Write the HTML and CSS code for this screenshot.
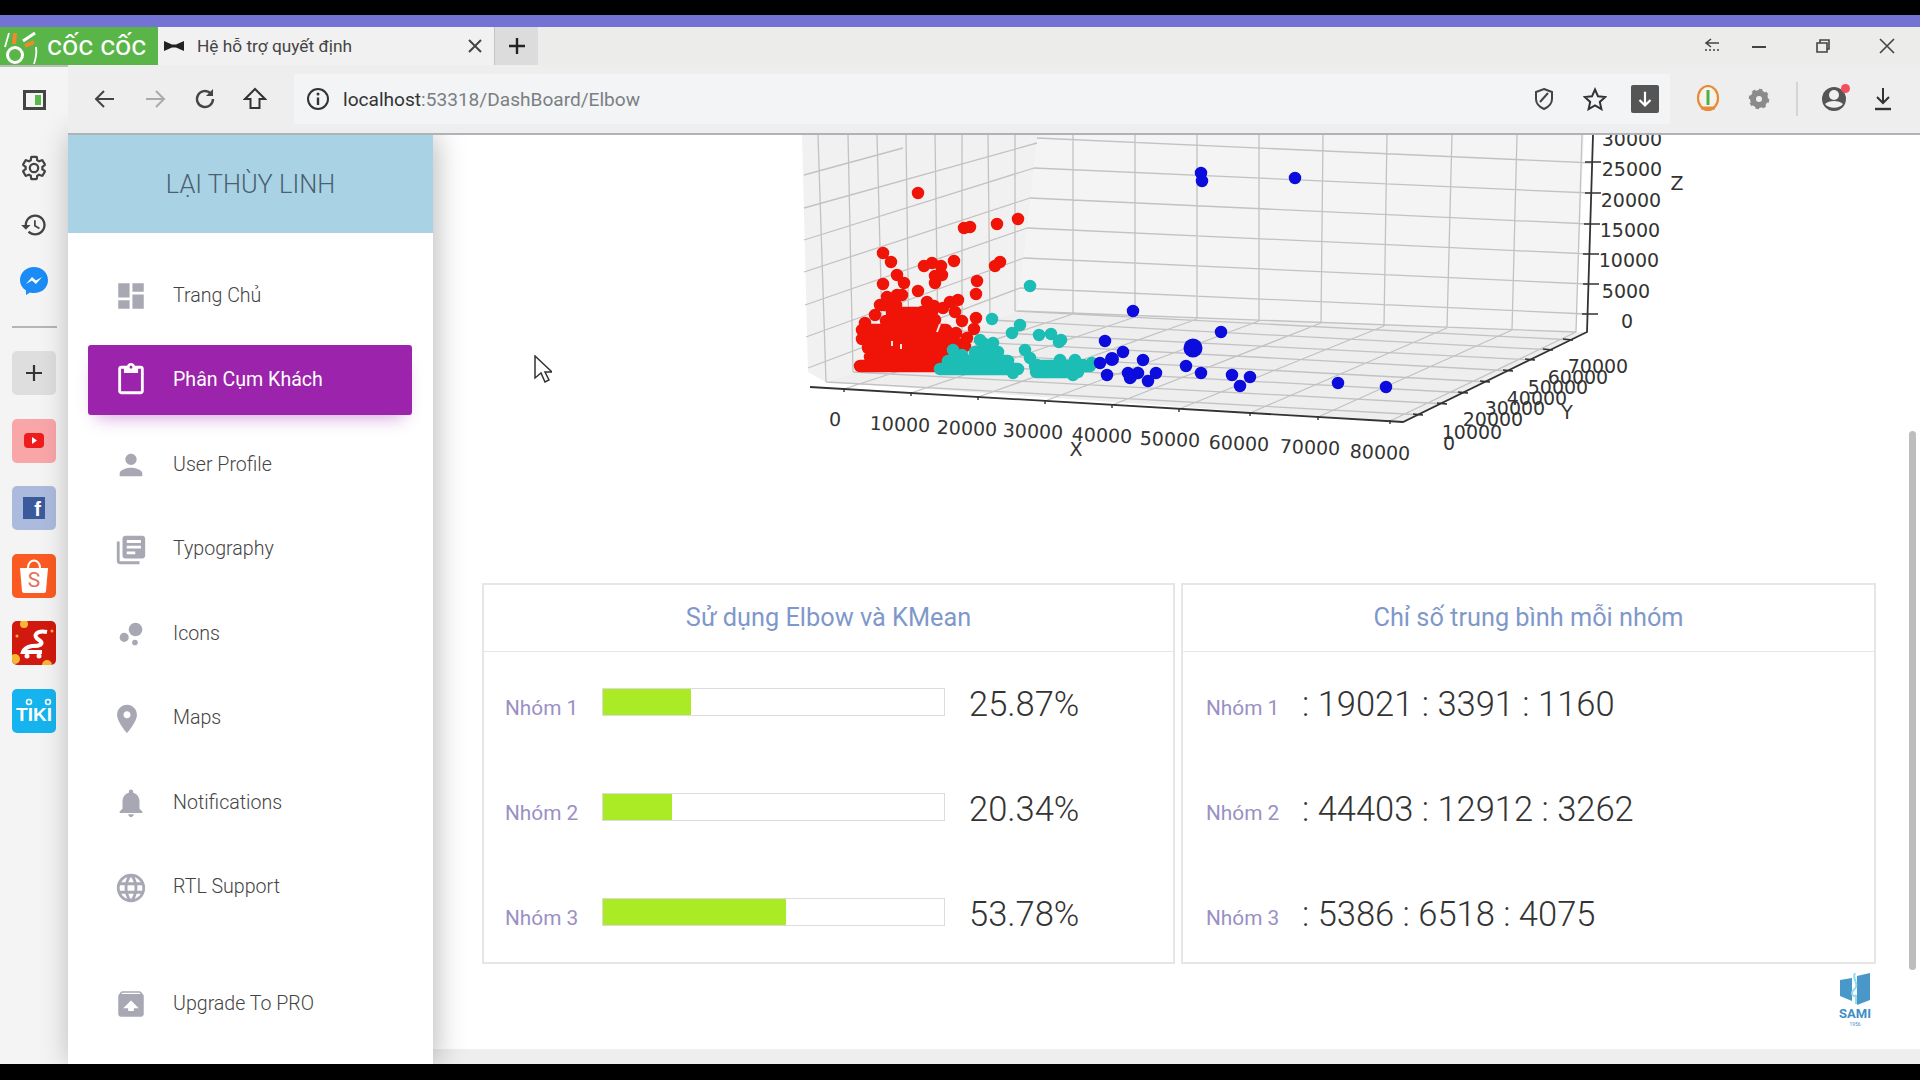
FILE: index.html
```html
<!DOCTYPE html>
<html lang="vi">
<head>
  <meta charset="UTF-8" />
  <title>Hệ hỗ trợ quyết định</title>
  <link rel="stylesheet" href="styles.css">
</head>
<body>
  <div class="top-black"></div>
  <div class="top-purple"></div>

  <!-- Tab strip -->
  <div class="tabstrip">
    <div class="brand">
      <svg class="brand-mark" viewBox="0 0 40 38"><circle cx="15" cy="28" r="7.500" fill="none" stroke="#fff" stroke-width="3"/><path d="M5 20L9 6M36 20c1 6 0 11-2 17" fill="none" stroke="#fff" stroke-width="1.800"/><path d="M15 6l-1 11M25 19l9-4" stroke="#f08a2c" stroke-width="4"/><path d="M23 14L35 6" stroke="#fff" stroke-width="3"/></svg>
      <span>cốc cốc</span>
    </div>
    <div class="tab">
      <svg class="favicon" viewBox="0 0 20 12"><path d="M0 1l8 3.5h4L20 1v10l-8-3.5H8L0 11z" fill="#222"/></svg>
      <span class="tab-title">Hệ hỗ trợ quyết định</span>
      <svg class="tab-close" viewBox="0 0 16 16"><path d="M2 2l12 12M14 2L2 14" stroke="#444" stroke-width="2"/></svg>
    </div>
    <div class="tab-new"><svg viewBox="0 0 18 18"><path d="M9 1v16M1 9h16" stroke="#222" stroke-width="2.4"/></svg></div>
    <div class="win-controls">
      <svg viewBox="0 0 16 16"><path d="M15 5H3M7 1L2 5l5 4" fill="none" stroke="#444" stroke-width="1.6"/><path d="M1 12h14" stroke="#444" stroke-width="1.6" stroke-dasharray="2 2"/></svg>
      <svg class="win-min" viewBox="0 0 16 16"><path d="M1 9h14" stroke="#444" stroke-width="2"/></svg>
      <svg viewBox="0 0 16 16"><path d="M2 5h10v9H2zM5 5V2h9v9h-2" fill="none" stroke="#444" stroke-width="1.6"/></svg>
      <svg viewBox="0 0 16 16"><path d="M1 1l14 14M15 1L1 15" stroke="#444" stroke-width="1.6"/></svg>
    </div>
  </div>

  <div class="window">
    <!-- Left strip of the browser -->
    <div class="appbar">
      <svg class="bar-toggle" viewBox="0 0 23 20"><rect x="1.5" y="1.5" width="20" height="17" fill="#f4f4f4" stroke="#444" stroke-width="3"/><rect x="12" y="5" width="6" height="10" fill="#57b947"/></svg>
      <svg class="bar-gear" viewBox="0 0 24 24"><path fill="none" stroke="#444" stroke-width="1.9" d="M19.14 12.94c.04-.3.06-.61.06-.94 0-.32-.02-.64-.07-.94l2.03-1.58c.18-.14.23-.41.12-.61l-1.92-3.32c-.12-.22-.37-.29-.59-.22l-2.39.96c-.5-.38-1.03-.7-1.62-.94l-.36-2.54c-.04-.24-.24-.41-.48-.41h-3.84c-.24 0-.43.17-.47.41l-.36 2.54c-.59.24-1.13.57-1.62.94l-2.39-.96c-.22-.08-.47 0-.59.22L2.74 8.87c-.12.21-.08.47.12.61l2.03 1.58c-.05.3-.07.62-.07.94s.02.64.07.94l-2.03 1.58c-.18.14-.23.41-.12.61l1.92 3.32c.12.22.37.29.59.22l2.39-.96c.5.38 1.03.7 1.62.94l.36 2.54c.05.24.24.41.48.41h3.84c.24 0 .44-.17.47-.41l.36-2.54c.59-.24 1.13-.56 1.62-.94l2.39.96c.22.08.47 0 .59-.22l1.92-3.32c.12-.22.07-.47-.12-.61l-2.01-1.58zM12 15.6c-1.98 0-3.6-1.62-3.6-3.6s1.62-3.6 3.6-3.6 3.6 1.62 3.6 3.6-1.62 3.6-3.6 3.6z"/></svg>
      <svg class="bar-history" viewBox="0 0 24 24"><path fill="#444" d="M13 3c-4.97 0-9 4.03-9 9H1l3.89 3.89.07.14L9 12H6c0-3.87 3.13-7 7-7s7 3.13 7 7-3.13 7-7 7c-1.93 0-3.68-.79-4.94-2.06l-1.42 1.42C8.27 19.99 10.51 21 13 21c4.97 0 9-4.03 9-9s-4.03-9-9-9zm-1 5v5l4.28 2.54.72-1.21-3.5-2.08V8H12z"/></svg>
      <svg class="bar-messenger" viewBox="0 0 28 28"><path fill="#1b8cf5" d="M14 0c8 0 14 5.800 14 13.200S22 26 14 26c-1.500 0-2.800-.2-4-.6L6 28v-4.500C2.300 21 0 17.400 0 13.200 0 5.800 6 0 14 0z"/><path fill="#fff" d="M6 17l6-7 4 3.500 6-3.500-6 7-4-3.500z"/></svg>
      <div class="bar-divider"></div>
      <div class="bar-apps">
        <div class="app app-plus"><svg viewBox="0 0 18 18"><path d="M9 1v16M1 9h16" stroke="#333" stroke-width="2.2"/></svg></div>
        <div class="app app-youtube"><svg viewBox="0 0 20 15"><rect width="20" height="15" rx="4" fill="#ee1c1c"/><path d="M8 4l5 3.500L8 11z" fill="#fff"/></svg></div>
        <div class="app app-facebook"><div class="fb-square">f</div></div>
        <div class="app app-shopee"><svg viewBox="0 0 32 34"><path d="M10 9c0-10 12-10 12 0" fill="none" stroke="#fff" stroke-width="2"/><path d="M2 9h28l-2 23c0 1-1 2-2 2H6c-1 0-2-1-2-2z" fill="#fff"/></svg><span>S</span></div>
        <div class="app app-sendo"><svg viewBox="0 0 44 44"><circle cx="12" cy="3" r="4" fill="#f7b733"/><circle cx="3" cy="38" r="5" fill="#f7b733"/><circle cx="35" cy="44" r="5" fill="#f7b733"/><circle cx="5" cy="15" r="1.500" fill="#f7b733"/><circle cx="40" cy="10" r="1.500" fill="#f7b733"/><path d="M35 11C24 9 20 15 27 19C33 23 28 25 20 25C15 26 12 28 11 31H30" fill="none" stroke="#fff" stroke-width="4"/><circle cx="15" cy="35" r="2.500" fill="#fff"/><circle cx="27" cy="35" r="2.500" fill="#fff"/></svg></div>
        <div class="app app-tiki">TIKI<svg class="tiki-eyes" viewBox="0 0 44 8"><circle cx="17" cy="4" r="2.500" fill="none" stroke="#fff" stroke-width="1.500"/><circle cx="36" cy="4" r="2.500" fill="none" stroke="#fff" stroke-width="1.500"/></svg></div>
      </div>
    </div>

    <div class="pane">
      <!-- Address bar -->
      <div class="toolbar">
        <svg class="tb-icon tb-back" viewBox="0 0 24 24"><path d="M21 12H4M11 4l-8 8 8 8" fill="none" stroke="#444" stroke-width="2"/></svg>
        <svg class="tb-icon" viewBox="0 0 24 24"><path d="M3 12h17M13 4l8 8-8 8" fill="none" stroke="#aaa" stroke-width="2"/></svg>
        <svg class="tb-icon" viewBox="0 0 24 24"><path d="M20 12a8 8 0 1 1-2.500-5.800" fill="none" stroke="#444" stroke-width="2.400"/><path d="M20 2v7h-7" fill="#444"/></svg>
        <svg class="tb-icon" viewBox="0 0 24 24"><path d="M12 2L2 12h5.500v9h9v-9H22z" fill="none" stroke="#333" stroke-width="2"/></svg>
        <div class="urlbox">
          <svg class="tb-icon" viewBox="0 0 24 24"><circle cx="12" cy="12" r="10" fill="none" stroke="#333" stroke-width="2"/><path d="M12 10.500V18" stroke="#333" stroke-width="2.400"/><circle cx="12" cy="7" r="1.500" fill="#333"/></svg>
          <span class="url"><b>localhost</b>:53318/DashBoard/Elbow</span>
          <svg class="tb-icon url-shield" viewBox="0 0 24 24"><path d="M12 2l8 3v7c0 5-3.500 8-8 10-4.500-2-8-5-8-10V5z" fill="none" stroke="#444" stroke-width="2"/><path d="M8 15l8-9" stroke="#444" stroke-width="2"/></svg>
          <svg class="tb-icon url-star" viewBox="0 0 24 24"><path d="M12 2.500l3 6.800 7.300.7-5.500 4.900 1.600 7.200L12 18.300l-6.400 3.800 1.600-7.200L1.700 10l7.300-.7z" fill="none" stroke="#333" stroke-width="2"/></svg>
          <div class="url-download"><svg viewBox="0 0 24 24"><path d="M12 4v15M6 13l6 6 6-6" fill="none" stroke="#fff" stroke-width="2.400"/></svg></div>
        </div>
        <svg class="tb-icon tb-orange" viewBox="0 0 24 28"><ellipse cx="12" cy="13" rx="10" ry="12" fill="#f6f3ea" stroke="#e98a3a" stroke-width="2.200"/><path d="M12 5v15" stroke="#4caf50" stroke-width="3"/><path d="M5 23h14" stroke="#e98a3a" stroke-width="3"/></svg>
        <svg class="tb-icon tb-cog" viewBox="0 0 24 24"><circle cx="12" cy="12" r="6" fill="none" stroke="#8a8a8a" stroke-width="6"/><circle cx="12" cy="12" r="9" fill="none" stroke="#8a8a8a" stroke-width="2.500" stroke-dasharray="3.500 3.500"/></svg>
        <div class="tb-divider"></div>
        <div class="tb-profile">
          <svg class="tb-icon" viewBox="0 0 26 28"><circle cx="13" cy="14" r="12" fill="#555"/><circle cx="13" cy="10" r="5" fill="#f0f0f0"/><path d="M4 19c4-4 14-4 18 0-4 5-14 5-18 0z" fill="#f0f0f0"/></svg>
          <div class="tb-badge"></div>
        </div>
        <svg class="tb-icon tb-save" viewBox="0 0 24 24"><path d="M12 1v15M6 10l6 6 6-6" fill="none" stroke="#333" stroke-width="2"/><path d="M4 22h16" stroke="#333" stroke-width="2.400"/></svg>
      </div>

      <div class="page">
        <!-- Sidebar -->
        <aside class="sidebar">
          <div class="side-head">LẠI THÙY LINH</div>
          <nav class="side-nav">
            <a class="nav-item">
              <svg class="nav-icon" viewBox="0 0 24 24"><path d="M3 13h8V3H3v10zm0 8h8v-6H3v6zm10 0h8V11h-8v10zm0-18v6h8V3h-8z"/></svg>
              Trang Chủ
            </a>
            <a class="nav-item active">
              <svg class="nav-icon" viewBox="0 0 24 24"><path d="M19 2h-4.180C14.400.84 13.300 0 12 0c-1.300 0-2.400.84-2.820 2H5c-1.100 0-2 .9-2 2v16c0 1.100.9 2 2 2h14c1.100 0 2-.9 2-2V4c0-1.100-.9-2-2-2zm-7 0c.55 0 1 .45 1 1s-.45 1-1 1-1-.45-1-1 .45-1 1-1zm7 18H5V4h2v3h10V4h2v16z"/></svg>
              Phân Cụm Khách
            </a>
            <a class="nav-item">
              <svg class="nav-icon" viewBox="0 0 24 24"><path d="M12 12c2.210 0 4-1.790 4-4s-1.790-4-4-4-4 1.790-4 4 1.790 4 4 4zm0 2c-2.670 0-8 1.340-8 4v2h16v-2c0-2.660-5.330-4-8-4z"/></svg>
              User Profile
            </a>
            <a class="nav-item">
              <svg class="nav-icon" viewBox="0 0 24 24"><path d="M4 6H2v14c0 1.100.9 2 2 2h14v-2H4V6zm16-4H8c-1.100 0-2 .9-2 2v12c0 1.100.9 2 2 2h12c1.100 0 2-.9 2-2V4c0-1.100-.9-2-2-2zm-1 9H9V9h10v2zm-4 4H9v-2h6v2zm4-8H9V5h10v2z"/></svg>
              Typography
            </a>
            <a class="nav-item">
              <svg class="nav-icon" viewBox="0 0 24 24"><circle cx="7.200" cy="14.400" r="3.200"/><circle cx="14.800" cy="18" r="2"/><circle cx="15.200" cy="8.800" r="4.800"/></svg>
              Icons
            </a>
            <a class="nav-item">
              <svg class="nav-icon nav-pin" viewBox="0 0 24 24"><path d="M12 2C8.130 2 5 5.130 5 9c0 5.250 7 13 7 13s7-7.750 7-13c0-3.870-3.130-7-7-7zm0 9.500c-1.380 0-2.500-1.120-2.500-2.500s1.120-2.500 2.500-2.500 2.500 1.120 2.500 2.500-1.120 2.500-2.500 2.500z"/></svg>
              Maps
            </a>
            <a class="nav-item">
              <svg class="nav-icon" viewBox="0 0 24 24"><path d="M12 22c1.100 0 2-.9 2-2h-4c0 1.100.89 2 2 2zm6-6v-5c0-3.070-1.640-5.640-4.500-6.320V4c0-.83-.67-1.500-1.500-1.500s-1.500.67-1.500 1.500v.68C7.630 5.360 6 7.920 6 11v5l-2 2v1h16v-1l-2-2z"/></svg>
              Notifications
            </a>
            <a class="nav-item">
              <svg class="nav-icon" viewBox="0 0 24 24"><path d="M11.990 2C6.470 2 2 6.480 2 12s4.470 10 9.990 10C17.520 22 22 17.520 22 12S17.520 2 11.990 2zm6.930 6h-2.950c-.32-1.250-.78-2.450-1.380-3.560 1.840.63 3.370 1.910 4.330 3.560zM12 4.040c.83 1.200 1.480 2.530 1.910 3.960h-3.820c.43-1.430 1.080-2.760 1.910-3.960zM4.260 14C4.100 13.360 4 12.690 4 12s.1-1.360.26-2h3.380c-.08.66-.14 1.320-.14 2 0 .68.06 1.340.14 2H4.260zm.82 2h2.950c.32 1.250.78 2.450 1.380 3.560-1.840-.63-3.370-1.900-4.330-3.560zm2.950-8H5.080c.96-1.660 2.490-2.930 4.330-3.560C8.810 5.550 8.350 6.750 8.030 8zM12 19.960c-.83-1.200-1.480-2.530-1.910-3.960h3.820c-.43 1.430-1.080 2.760-1.910 3.960zM14.340 14H9.660c-.09-.66-.16-1.320-.16-2 0-.68.07-1.350.16-2h4.680c.09.65.16 1.320.16 2 0 .68-.07 1.340-.16 2zm.25 5.560c.6-1.110 1.060-2.310 1.380-3.560h2.950c-.96 1.650-2.490 2.930-4.330 3.560zM16.360 14c.08-.66.14-1.320.14-2 0-.68-.06-1.340-.14-2h3.380c.16.64.26 1.310.26 2s-.1 1.360-.26 2h-3.380z"/></svg>
              RTL Support
            </a>
            <a class="nav-item nav-upgrade">
              <svg class="nav-icon" viewBox="0 0 24 24"><path d="M20.550 5.220l-1.390-1.680C18.880 3.210 18.470 3 18 3H6c-.47 0-.88.21-1.150.55L3.460 5.220C3.170 5.570 3 6.010 3 6.500V19c0 1.100.89 2 2 2h14c1.100 0 2-.9 2-2V6.500c0-.49-.17-.93-.45-1.280zM12 9.500l5.500 5.500H14v2h-4v-2H6.500L12 9.500zM5.120 5l.82-1h12l.93 1H5.120z"/></svg>
              Upgrade To PRO
            </a>
          </nav>
        </aside>

        <!-- Main content -->
        <main class="main">
          <!-- viewBox keeps screen coordinates so the plot can be read off the picture -->
          <svg class="chart" viewBox="433 135 1487 448">
            <polygon class="pane-left" points="802,135 1038,135 1018,311 826,382 808,372"/>
            <polygon class="pane-back" points="1038,135 1584,135 1576,332 1018,311"/>
            <polygon class="pane-floor" points="826,382 1403,422 1587,332 1576,332 1018,311"/>
            <!-- grid -->
            <path class="grid" d="M1034 168L1590 193M1030 198L1590 224M1027 228L1590 254M1024 258L1587 284M1020 288L1587 314M1037 138L1593 163
              M804 175L903 148M804 208L1037 143M804 240L1034 168M804 272L1030 198M805 305L1027 228M806 337L1024 258M808 368L1020 288
              M818 135L826 382M848 135L853 372M877 135L883 361M906 135L909 351M935 135L938 340M962 135L962 331M988 135L990 320M1015 135L1015 311
              M1073 135V314M1135 135L1135 317M1197 135L1197 319M1259 135L1259 321M1323 135L1321 323M1387 135L1384 326M1452 135L1447 328M1517 135L1512 330M1582 135L1576 332
              M1018 311L1576 332
              M1073 314L844 389M1135 317L911 393M1197 319L978 397M1259 321L1045 401M1321 323L1112 405M1384 326L1179 409M1447 328L1250 413M1512 330L1318 417M1576 332L1390 421
              M826 382L1423 415M853 372L1447 404M883 361L1468 393M909 351L1490 382M938 340L1513 371M962 331L1535 360M990 320L1553 350M1015 311L1573 340"/>
            <!-- axes and ticks -->
            <path class="axis" d="M810 387L1403 422L1587 332L1593 135"/>
            <path class="tick" d="M1585 162h16M1585 193h16M1584 224h16M1583 254h16M1583 284h16M1582 314h16
              M844 388v4M911 392v4M978 396v4M1045 400v4M1112 404v4M1179 408v4M1250 412v4M1318 416v4M1390 420v4
              M1423 415l-10 -1M1447 404l-10 -1M1468 393l-10 -1M1490 382l-10 -1M1513 371l-10 -1M1535 360l-10 -1M1553 350l-10 -1M1573 340l-10 -1"/>
            <!-- clusters -->
            <path class="dots red" d="M918 193h0M964 228h0M970 227h0M997 224h0M1018 219h0M883 253h0M891 262h0M924 266h0M932 263h0M941 266h0M954 261h0M995 266h0M1000 262h0M935 276h0M942 275h0M935 283h0M897 275h0M904 283h0M883 284h0M918 291h0M897 295h0M902 295h0M977 281h0M976 294h0
              M887 297h0M880 305h0M888 305h0M875 315h0M865 323h0M927 302h0M922 312h0M934 306h0M950 302h0M958 300h0M943 308h0M955 312h0M962 321h0M935 320h0M976 318h0M974 329h0M967 338h0M965 346h0M948 335h0M956 333h0M953 340h0
              M860 366H938M870 357H944M868 348H942M862 339H938M862 330H936M886 321H927M892 313H918M884 305H896M928 330H946M944 344H958M927 312H932"/>
            <path class="gap" d="M892 341v5M901 344v5M940 324l-3 8M944 322h3"/>
            <path class="dots teal" d="M1030 286h0M992 319h0M1020 325h0M1012 333h0M1039 335h0M1051 334h0M1061 340h0M1059 342h0
              M980 340h0M983 343h0M993 343h0M997 353h0M1007 363h0M1013 373h0M953 350h0M962 355h0M948 363h0M1025 350h0M1030 358h0M1037 365h0M1047 372h0M1060 360h0M1075 360h0M1073 375h0M1063 372h0M1083 365h0M1092 363h0
              M940 369H1018M948 361H1008M975 352H998M1035 366H1090M1036 372H1078"/>
            <path class="dots blue" d="M1201 173h0M1202 181h0M1295 178h0M1133 311h0M1221 332h0M1105 341h0M1123 352h0M1112 359h0M1100 363h0M1143 360h0M1186 366h0M1107 375h0M1201 373h0M1232 375h0M1250 377h0M1240 386h0M1128 373h0M1130 378h0M1138 373h0M1131 377h0M1148 381h0M1156 373h0M1338 383h0M1386 387h0"/>
            <circle class="blue-big" cx="1193" cy="348" r="9.500"/>
            <circle class="blue-big" cx="1112" cy="359" r="7"/>
            <!-- z labels -->
            <text x="1632" y="139">30000</text>
            <text x="1632" y="169">25000</text>
            <text x="1631" y="200">20000</text>
            <text x="1630" y="230">15000</text>
            <text x="1629" y="260">10000</text>
            <text x="1626" y="291">5000</text>
            <text x="1627" y="321">0</text>
            <text x="1677" y="183">Z</text>
            <!-- x labels -->
            <text x="835" y="419" transform="rotate(2.500 835 419)">0</text>
            <text x="900" y="424" transform="rotate(2.500 900 424)">10000</text>
            <text x="967" y="428" transform="rotate(2.500 967 428)">20000</text>
            <text x="1033" y="431" transform="rotate(2.500 1033 431)">30000</text>
            <text x="1102" y="435" transform="rotate(2.500 1102 435)">40000</text>
            <text x="1170" y="439" transform="rotate(2.500 1170 439)">50000</text>
            <text x="1239" y="443" transform="rotate(2.500 1239 443)">60000</text>
            <text x="1310" y="447" transform="rotate(2.500 1310 447)">70000</text>
            <text x="1380" y="452" transform="rotate(2.500 1380 452)">80000</text>
            <text x="1076" y="449">X</text>
            <!-- y labels -->
            <text x="1449" y="443">0</text>
            <text x="1472" y="432">10000</text>
            <text x="1493" y="419">20000</text>
            <text x="1515" y="408">30000</text>
            <text x="1537" y="398">40000</text>
            <text x="1558" y="387">50000</text>
            <text x="1578" y="377">60000</text>
            <text x="1598" y="366">70000</text>
            <text x="1567" y="412">Y</text>
          </svg>

          <div class="cards">
            <section class="card card-usage">
              <h3 class="card-title">Sử dụng Elbow và KMean</h3>
              <div class="card-rows">
                <div class="row">
                  <span class="row-label">Nhóm 1</span>
                  <div class="bar"><div class="bar-fill" style="width: 25.87%"></div></div>
                  <span class="row-value pct">25.87%</span>
                </div>
                <div class="row">
                  <span class="row-label">Nhóm 2</span>
                  <div class="bar"><div class="bar-fill" style="width: 20.34%"></div></div>
                  <span class="row-value pct">20.34%</span>
                </div>
                <div class="row">
                  <span class="row-label">Nhóm 3</span>
                  <div class="bar"><div class="bar-fill" style="width: 53.78%"></div></div>
                  <span class="row-value pct">53.78%</span>
                </div>
              </div>
            </section>
            <section class="card">
              <h3 class="card-title">Chỉ số trung bình mỗi nhóm</h3>
              <div class="card-rows card-rows-avg">
                <div class="row">
                  <span class="row-label">Nhóm 1</span>
                  <span class="row-value">: 19021 : 3391 : 1160</span>
                </div>
                <div class="row">
                  <span class="row-label">Nhóm 2</span>
                  <span class="row-value">: 44403 : 12912 : 3262</span>
                </div>
                <div class="row">
                  <span class="row-label">Nhóm 3</span>
                  <span class="row-value">: 5386 : 6518 : 4075</span>
                </div>
              </div>
            </section>
          </div>

          <div class="logo-row">
            <div class="sami">
              <svg viewBox="0 0 30 34"><path d="M0 7l12-2v23L0 23zM17 3L30 0v27l-13 5z" fill="#4a97c9"/><path d="M15 0c-3 6 3 9 1 14-1 3-4 3-4 6s3 4 4 2v9" fill="none" stroke="#8fdcea" stroke-width="2"/></svg>
              <span class="sami-name">SAMI</span>
              <span class="sami-year">1956</span>
            </div>
          </div>
          <div class="bottom-strip"></div>

          <div class="scroll-thumb"></div>
          <svg class="cursor" viewBox="0 0 18 28"><path d="M1 1v22l6-5 4 9 4-2-4-8h7z" fill="#fff" stroke="#333" stroke-width="1.500"/></svg>
        </main>
      </div>
    </div>
  </div>
  <div class="bottom-black"></div>
</body>
</html>
```
FILE: styles.css
```css
/* Page frame */
body {
  margin: 0;
  width: 1920px;
  height: 1080px;
  overflow: hidden;
  background: #000;
  font-family: Roboto, "Noto Sans", sans-serif;
  display: flex;
  flex-direction: column;
}
.top-black {
  height: 15px;
  flex: none;
}
.top-purple {
  height: 12px;
  flex: none;
  background: #7373d3;
}
.bottom-black {
  flex: 1;
}

/* Tab strip */
.tabstrip {
  height: 38px;
  flex: none;
  display: flex;
  align-items: stretch;
  background: #ececea;
  border-bottom: 2px solid #bdbdbd;
  box-sizing: content-box;
  margin-bottom: -2px;
  position: relative;
  z-index: 2;
}
.brand {
  width: 158px;
  flex: none;
  background: #59b548;
  color: #fff;
  display: flex;
  align-items: center;
  font-size: 28.5px;
  line-height: 1;
  white-space: nowrap;
}
.brand-mark {
  width: 40px;
  height: 38px;
  margin-right: 7px;
}
.tab {
  width: 337px;
  flex: none;
  display: flex;
  align-items: center;
  background: #f1f1f1;
  border-right: 1px solid #c4c4c4;
  box-sizing: border-box;
  padding-left: 6px;
}
.favicon {
  width: 20px;
  height: 12px;
}
.tab-title {
  margin-left: 13px;
  font-size: 17.3px;
  color: #444;
}
.tab-close {
  width: 16px;
  height: 16px;
  margin-left: auto;
  margin-right: 11px;
}
.tab-new {
  width: 43px;
  flex: none;
  background: #dcdcdc;
  display: flex;
  align-items: center;
  justify-content: center;
}
.tab-new svg {
  width: 18px;
  height: 18px;
}
.win-controls {
  margin-left: auto;
  display: flex;
  align-items: center;
  padding-right: 25px;
}
.win-controls svg {
  width: 16px;
  height: 16px;
  margin-left: 48px;
}
.win-controls .win-min {
  margin-left: 31px;
}

/* Left strip */
.window {
  flex: none;
  height: 999px;
  display: flex;
}
.appbar {
  width: 68px;
  flex: none;
  background: #f4f4f4;
  display: flex;
  flex-direction: column;
  align-items: center;
  padding-top: 25px;
  box-sizing: border-box;
}
.bar-toggle {
  width: 23px;
  height: 20px;
}
.bar-gear {
  width: 28px;
  height: 28px;
  margin-top: 44px;
}
.bar-history {
  width: 28px;
  height: 28px;
  margin-top: 29px;
}
.bar-messenger {
  width: 28px;
  height: 28px;
  margin-top: 28px;
}
.bar-divider {
  width: 45px;
  height: 2px;
  margin-top: 31px;
  background: #b5b5b5;
}
.bar-apps {
  margin-top: 23px;
  display: flex;
  flex-direction: column;
  gap: 23.6px;
}
.app {
  width: 44px;
  height: 44px;
  border-radius: 5px;
  display: flex;
  align-items: center;
  justify-content: center;
  position: relative;
}
.app-plus {
  background: #dedede;
}
.app-plus svg {
  width: 18px;
  height: 18px;
}
.app-youtube {
  background: #f9a6a9;
}
.app-youtube svg {
  width: 20px;
  height: 15px;
}
.app-facebook {
  background: #acbbdd;
}
.fb-square {
  width: 22px;
  height: 22px;
  background: #3b5a9c;
  color: #fff;
  font-family: "Liberation Sans", sans-serif;
  font-weight: 700;
  font-size: 20px;
  line-height: 24px;
  text-align: right;
  padding-right: 4px;
  box-sizing: border-box;
}
.app-shopee {
  background: #fb5a22;
}
.app-shopee svg {
  width: 32px;
  height: 34px;
}
.app-shopee span {
  position: absolute;
  left: 0;
  right: 0;
  top: 14px;
  text-align: center;
  color: #e0705a;
  font-size: 21px;
  line-height: 24px;
}
.app-sendo {
  background: #d2190f;
  overflow: hidden;
}
.app-sendo svg {
  width: 44px;
  height: 44px;
}
.app-tiki {
  background: #16b4ee;
  color: #fff;
  font-family: "Liberation Sans", sans-serif;
  font-weight: 700;
  font-size: 19px;
  padding-top: 9px;
  box-sizing: border-box;
}
.tiki-eyes {
  position: absolute;
  left: 0;
  top: 9px;
  width: 44px;
  height: 8px;
}

/* Toolbar */
.pane {
  flex: 1;
  min-width: 0;
  display: flex;
  flex-direction: column;
}
.toolbar {
  height: 70px;
  flex: none;
  display: flex;
  align-items: center;
  background: #eeeeee;
  border-bottom: 2px solid #adb3b8;
  box-sizing: border-box;
  padding-left: 25px;
  gap: 26px;
  position: relative;
  z-index: 2;
}
.tb-icon {
  width: 24px;
  height: 24px;
  flex: none;
}
.urlbox {
  width: 1376px;
  height: 50px;
  flex: none;
  margin-left: 1px;
  background: #f2f4f5;
  display: flex;
  align-items: center;
  box-sizing: border-box;
  padding-left: 12px;
}
.url {
  margin-left: 13px;
  font-size: 19.1px;
  color: #7b7f84;
  white-space: nowrap;
}
.url b {
  font-weight: 400;
  color: #333;
}
.url-shield {
  margin-left: auto;
}
.url-star {
  margin-left: 27px;
}
.url-download {
  width: 28px;
  height: 28px;
  margin-left: 24px;
  margin-right: 11px;
  background: #555;
  border-radius: 2px;
  display: flex;
  align-items: center;
  justify-content: center;
}
.url-download svg {
  width: 22px;
  height: 22px;
}
.tb-orange {
  height: 28px;
}
.tb-cog {
  margin-left: 1px;
}
.tb-divider {
  width: 2px;
  height: 34px;
  background: #d5d5d5;
  margin-left: -1px;
}
.tb-profile {
  position: relative;
  width: 26px;
  height: 28px;
  margin-left: -3px;
}
.tb-profile .tb-icon {
  width: 26px;
  height: 28px;
  display: block;
}
.tb-badge {
  position: absolute;
  right: -3px;
  top: -1px;
  width: 9px;
  height: 9px;
  border-radius: 50%;
  background: #f4505b;
}
.tb-save {
  margin-left: -2px;
}

/* Page area */
.page {
  flex: 1;
  min-height: 0;
  display: flex;
}
.sidebar {
  width: 365px;
  flex: none;
  background: #fff;
  box-shadow: 3px 0 28px rgba(0, 0, 0, 0.28);
  position: relative;
  z-index: 1;
  display: flex;
  flex-direction: column;
}
.side-head {
  height: 98px;
  flex: none;
  background: #a9d3e5;
  color: #4a5f70;
  font-size: 25.4px;
  font-weight: 300;
  display: flex;
  align-items: center;
  justify-content: center;
}
.side-nav {
  padding: 27px 21px 0 20px;
  display: flex;
  flex-direction: column;
  gap: 14.5px;
}
.nav-item {
  height: 70px;
  display: flex;
  align-items: center;
  padding-left: 26px;
  gap: 25px;
  font-size: 19.6px;
  font-weight: 300;
  color: #444;
  border-radius: 3px;
}
.nav-icon {
  width: 34px;
  height: 34px;
  flex: none;
  margin-top: 2px;
  fill: #a8a8b4;
}
.nav-pin {
  margin-left: -4px;
  margin-right: 4px;
}
.nav-item.active {
  background: #9c23ab;
  color: #fff;
  font-weight: 400;
  box-shadow: 0 10px 18px -8px rgba(156, 39, 176, 0.45);
}
.nav-item.active .nav-icon {
  fill: #fff;
  margin-top: 0;
}
.nav-upgrade {
  margin-top: 32px;
}

/* Main content */
.main {
  flex: 1;
  min-width: 0;
  background: #fff;
  position: relative;
  overflow: hidden;
  display: flex;
  flex-direction: column;
}

/* 3D scatter */
.chart {
  width: 1487px;
  height: 448px;
  flex: none;
  display: block;
}
.chart text {
  font-family: "DejaVu Sans", sans-serif;
  font-size: 19px;
  fill: #333;
  text-anchor: middle;
  dominant-baseline: central;
}
.pane-left {
  fill: #f1f1f1;
}
.pane-back {
  fill: #f4f4f4;
}
.pane-floor {
  fill: #eeeeee;
}
.grid {
  fill: none;
  stroke: #c2c2c2;
  stroke-width: 1.3;
}
.axis {
  fill: none;
  stroke: #333;
  stroke-width: 1.8;
}
.tick {
  fill: none;
  stroke: #333;
  stroke-width: 1.4;
}
.dots {
  fill: none;
  stroke-width: 12.5;
  stroke-linecap: round;
}
.red {
  stroke: #f01408;
}
.teal {
  stroke: #1cbdb5;
}
.blue {
  stroke: #0c0cdc;
}
.blue-big {
  fill: #0c0cdc;
}
.gap {
  fill: none;
  stroke: #fbe4e0;
  stroke-width: 2;
}

/* Cards */
.cards {
  display: flex;
  gap: 6px;
  padding: 0 44px 0 49px;
  flex: none;
}
.card {
  flex: 1;
  border: 2px solid #e6e6e6;
}
.card-usage {
  flex: none;
  width: 693px;
  box-sizing: border-box;
}
.card-title {
  margin: 0;
  height: 66px;
  line-height: 66px;
  border-bottom: 1px solid #e6e6e6;
  text-align: center;
  font-size: 25.3px;
  font-weight: 400;
  color: #7f98ca;
}
.card-rows {
  display: flex;
  flex-direction: column;
  gap: 5px;
  padding-left: 21px;
}
.card-rows-avg {
  padding-left: 23px;
}
.row {
  height: 100px;
  display: flex;
  align-items: center;
}
.row-label {
  width: 97px;
  flex: none;
  padding-top: 12px;
  font-size: 20.8px;
  color: #9a90c4;
}
.card-rows-avg .row-label {
  width: 96px;
}
.bar {
  width: 343px;
  height: 28px;
  flex: none;
  background: #fff;
  border: 1px solid #dcdcdc;
  box-sizing: border-box;
}
.bar-fill {
  height: 100%;
  background: #abeb25;
}
.row-value {
  padding-top: 3px;
  font-size: 34.5px;
  font-weight: 300;
  color: #333;
  white-space: nowrap;
}
.pct {
  margin-left: 24px;
}

/* Footer mark */
.logo-row {
  flex: 1;
  display: flex;
  justify-content: flex-end;
  padding: 9px 50px 0 0;
}
.sami {
  width: 30px;
  display: flex;
  flex-direction: column;
  align-items: center;
  color: #3f8fc6;
}
.sami svg {
  width: 30px;
  height: 34px;
  flex: none;
}
.sami-name {
  font-size: 13px;
  font-weight: 700;
  line-height: 14px;
}
.sami-year {
  font-size: 5px;
  line-height: 6px;
}
.bottom-strip {
  height: 15px;
  flex: none;
  background: #eeeeee;
}

/* Overlays */
.scroll-thumb {
  position: absolute;
  right: 4px;
  top: 296px;
  width: 7px;
  height: 539px;
  background: #bdbdbd;
  border-radius: 4px;
}
.cursor {
  position: absolute;
  left: 101px;
  top: 220px;
  width: 18px;
  height: 28px;
}
```
